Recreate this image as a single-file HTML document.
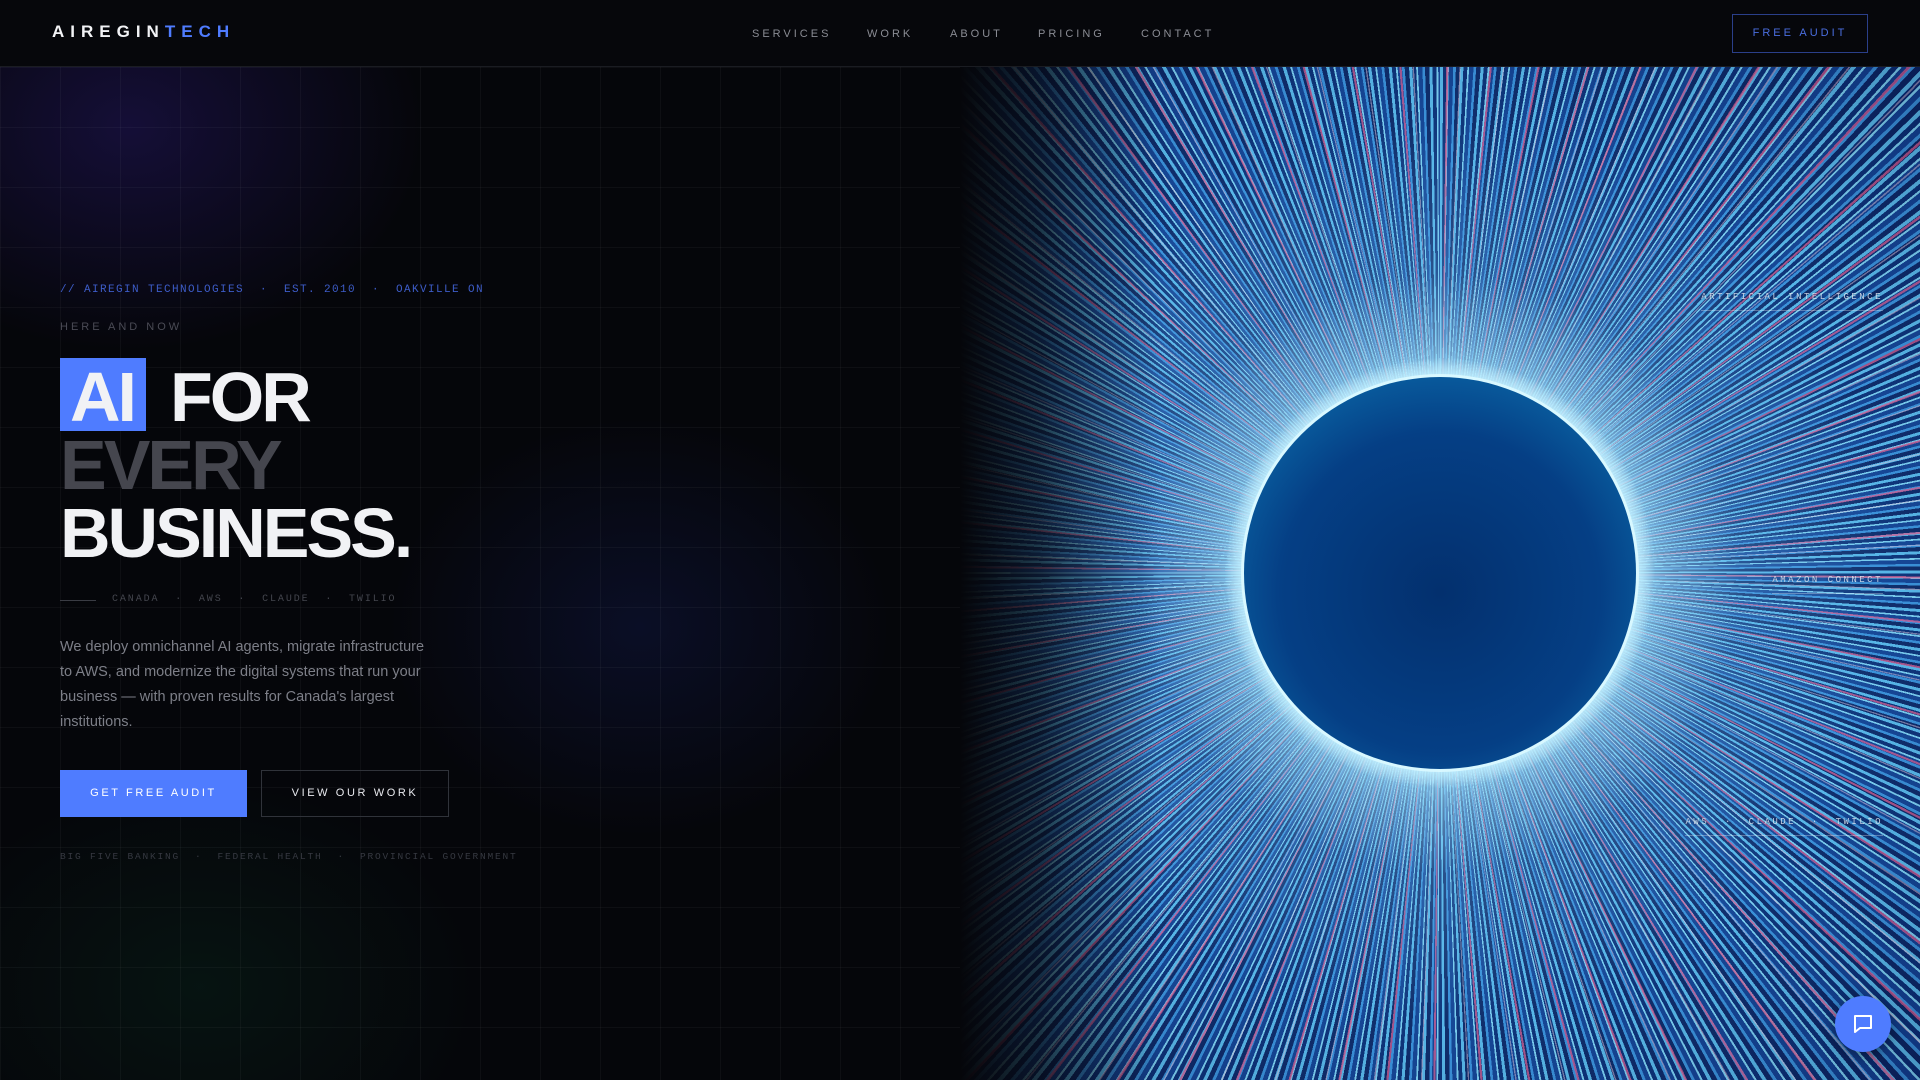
<!DOCTYPE html>
<html><head><meta charset="utf-8"><style>
*{margin:0;padding:0;box-sizing:border-box}
html,body{width:1920px;height:1080px;overflow:hidden;background:#05060a;font-family:"Liberation Sans",sans-serif}
.nav{position:absolute;left:0;top:0;width:1920px;height:67px;background:#06070b;border-bottom:1px solid #1a1c22;z-index:10}
.logo{position:absolute;left:52px;top:22px;font-size:17px;font-weight:bold;letter-spacing:6px;color:#f2f3f6}
.logo span{color:#4f7cff}
.menu{position:absolute;top:28px;font-size:11px;letter-spacing:3px;color:#8a8c94}
.fa{position:absolute;left:1732px;top:14px;width:136px;height:39px;border:1px solid #2a3f8a;color:#4a6ee0;font-size:11px;letter-spacing:3px;text-align:center;line-height:37px}
.left{position:absolute;left:0;top:67px;width:1000px;height:1013px;background:
radial-gradient(ellipse 420px 320px at 130px 60px,rgba(40,25,110,.45),transparent 70%),
radial-gradient(ellipse 360px 300px at 640px 560px,rgba(20,30,90,.35),transparent 70%),
radial-gradient(ellipse 400px 300px at 200px 920px,rgba(10,60,40,.25),transparent 70%),#05060a}
.grid{position:absolute;left:0;top:67px;width:1000px;height:1013px;background-image:linear-gradient(rgba(255,255,255,.035) 1px,transparent 1px),linear-gradient(90deg,rgba(255,255,255,.035) 1px,transparent 1px);background-size:60px 60px}
.art{position:absolute;left:960px;top:67px;width:960px;height:1013px;overflow:hidden;background:#06183f}
.rays1{position:absolute;inset:0;background:repeating-conic-gradient(from 0deg at 480px 506px,#5ab8e8 0deg .35deg,#0a2a70 .35deg .8deg,#7fd0f0 .8deg 1deg,#123d8e 1deg 1.5deg,#3a8fd8 1.5deg 1.8deg,#0b2260 1.8deg 2.3deg)}
.rays2{position:absolute;inset:0;background:repeating-conic-gradient(from 3deg at 480px 506px,transparent 0deg 2.6deg,rgba(230,90,140,.75) 2.6deg 2.85deg,transparent 2.85deg 4.1deg,rgba(240,200,220,.5) 4.1deg 4.25deg,transparent 4.25deg 5.3deg)}
.glow{position:absolute;inset:0;background:radial-gradient(circle at 480px 506px,rgba(230,250,255,.95) 196px,rgba(170,230,255,.6) 215px,rgba(110,190,240,.3) 300px,rgba(60,160,220,.1) 450px,rgba(0,10,40,.2) 700px)}
.orb{position:absolute;left:284px;top:310px;width:392px;height:392px;border-radius:50%;background:radial-gradient(circle at 50% 55%,#03306e 0%,#053f85 55%,#0a68a8 85%,#2aa2d8 96%);box-shadow:0 0 0 3px rgba(220,250,255,.9),0 0 30px 10px rgba(160,230,255,.7)}
.fade{position:absolute;left:960px;top:67px;width:200px;height:1013px;background:linear-gradient(90deg,#05060a 0%,rgba(5,6,10,.7) 40%,rgba(5,6,10,0) 100%)}
.mono{font-family:"Liberation Mono",monospace}
.t{position:absolute;white-space:nowrap}
.h1{position:absolute;left:60px;top:358px;font-size:70px;font-weight:bold;line-height:68px;letter-spacing:-3px;color:#f1f2f5}
.ai{background:#4f7cff;padding:0 12px 0 10px;display:inline-block;height:73px;line-height:78px;margin-right:24px}
.btn{position:absolute;top:770px;height:47px;font-size:11px;letter-spacing:2.6px;text-align:center;line-height:47px}
.lab{position:absolute;font-family:"Liberation Mono",monospace;font-size:9px;letter-spacing:2.5px;color:rgba(235,240,250,.8);border-bottom:1px solid rgba(255,255,255,.3);padding-bottom:8px;text-align:right;text-shadow:0 0 3px rgba(0,20,60,.6)}
.chat{position:absolute;left:1835px;top:996px;width:56px;height:56px;border-radius:50%;background:#4f7cff;box-shadow:0 4px 14px rgba(0,0,0,.4)}
</style></head><body>
<div class="left"></div><div class="grid"></div>
<div class="art"><div class="rays1"></div><div class="rays2"></div><div class="glow"></div><div class="orb"></div>
<div class="lab" style="right:37px;top:225px">ARTIFICIAL INTELLIGENCE</div>
<div class="lab" style="right:37px;top:508px">AMAZON CONNECT</div>
<div class="lab" style="right:37px;top:750px">AWS &nbsp;· &nbsp;CLAUDE &nbsp;· &nbsp;TWILIO</div>
</div>
<div class="fade"></div>
<div class="nav"><div class="logo">AIREGIN<span>TECH</span></div>
<div class="menu" style="left:752px">SERVICES</div><div class="menu" style="left:867px">WORK</div><div class="menu" style="left:950px">ABOUT</div><div class="menu" style="left:1038px">PRICING</div><div class="menu" style="left:1141px">CONTACT</div>
<div class="fa">FREE AUDIT</div></div>
<div class="t mono" style="left:60px;top:284px;font-size:11px;letter-spacing:1.4px;color:#3d5cc8">// AIREGIN TECHNOLOGIES &nbsp;· &nbsp;EST. 2010 &nbsp;· &nbsp;OAKVILLE ON</div>
<div class="t" style="left:60px;top:321px;font-size:11px;letter-spacing:3px;color:#4a4b55">HERE AND NOW</div>
<div class="h1"><span class="ai">AI</span>FOR<br><span style="color:#45464e">EVERY</span><br>BUSINESS.</div>
<div class="t" style="left:60px;top:600px;width:36px;height:1px;background:#3a3c44"></div>
<div class="t mono" style="left:112px;top:594px;font-size:10px;letter-spacing:1.9px;color:#44464e">CANADA &nbsp;· &nbsp;AWS &nbsp;· &nbsp;CLAUDE &nbsp;· &nbsp;TWILIO</div>
<div class="t" style="left:60px;top:635px;width:374px;white-space:normal;font-size:14.5px;line-height:25px;color:#7d7f88">We deploy omnichannel AI agents, migrate infrastructure to AWS, and modernize the digital systems that run your business — with proven results for Canada's largest institutions.</div>
<div class="btn" style="left:60px;width:187px;background:#4f7cff;color:#fff">GET FREE AUDIT</div>
<div class="btn" style="left:261px;width:188px;border:1px solid #30333a;color:#e8e9ee;line-height:45px">VIEW OUR WORK</div>
<div class="t mono" style="left:60px;top:851px;font-size:9.5px;letter-spacing:1.8px;color:#363941">BIG FIVE BANKING &nbsp;· &nbsp;FEDERAL HEALTH &nbsp;· &nbsp;PROVINCIAL GOVERNMENT</div>
<div class="chat"><svg width="56" height="56" viewBox="0 0 56 56"><path d="M20 20h16v12H25l-5 4z" fill="none" stroke="#fff" stroke-width="2" stroke-linejoin="round"/></svg></div>
</body></html>
